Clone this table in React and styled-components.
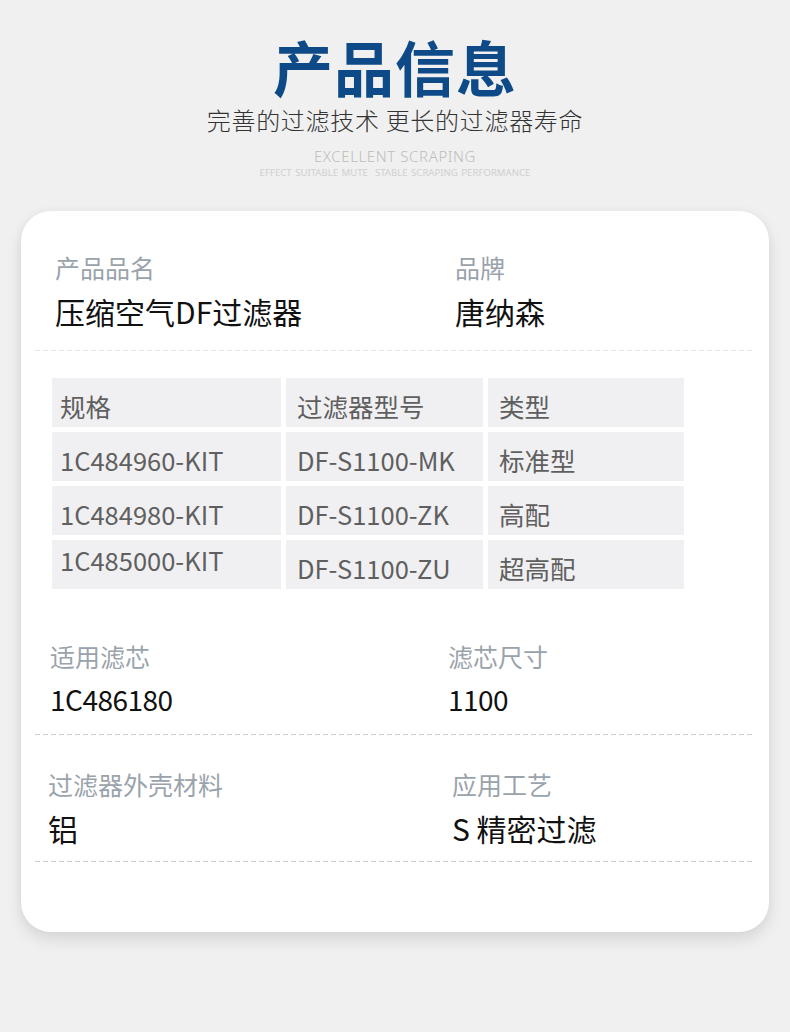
import React from 'react'
import styled, { createGlobalStyle } from 'styled-components'

const GlobalStyle = createGlobalStyle`
  html, body {
    margin: 0;
    padding: 0;
    background: #f0f0f0;
  }
  body {
    font-family: "Noto Sans CJK SC", "Noto Sans", sans-serif;
  }
`

const Page = styled.div`
  width: 790px;
  min-height: 1032px;
  padding-top: 31px;
  box-sizing: border-box;
  background: #f0f0f0;
`

const Header = styled.div`
  display: flex;
  flex-direction: column;
  align-items: center;
`

const Title = styled.h1`
  margin: 0;
  font-size: 60px;
  line-height: 70px;
  font-weight: 700;
  color: #0e4a87;
  letter-spacing: 1px;
`

const Subtitle = styled.div`
  margin-top: 4px;
  font-size: 24px;
  line-height: 30px;
  font-weight: 300;
  color: #333;
  letter-spacing: 0.7px;
`

const EnTitle = styled.div`
  margin-top: 11px;
  font-family: "Noto Sans", sans-serif;
  font-size: 15px;
  line-height: 20px;
  font-weight: 300;
  color: #bdbdbd;
  letter-spacing: 0.6px;
`

const EnLine = styled.div`
  margin-top: 1px;
  font-family: "Noto Sans", sans-serif;
  font-size: 9.6px;
  line-height: 12px;
  color: #cfcfcf;
  word-spacing: 1px;
`

const Card = styled.div`
  margin: 32px 0 0 21px;
  width: 748px;
  background: #fff;
  border-radius: 30px;
  padding: 39px 16px 70px 14px;
  box-sizing: border-box;
  box-shadow: 0 8px 16px rgba(0, 0, 0, 0.1), 0 0 10px rgba(0, 0, 0, 0.04);
`

const InfoRow = styled.div`
  display: grid;
  grid-template-columns: 400px 1fr;
  padding-left: ${p => p.$left}px;
  margin-top: ${p => p.$top || 0}px;
`

const Field = styled.div`
  display: flex;
  flex-direction: column;
  gap: ${p => p.$gap || 4}px;
  margin-left: ${p => p.$shift || 0}px;
`

const Label = styled.div`
  font-size: 25px;
  line-height: 34px;
  color: #9aa3ab;
`

const Value = styled.div`
  font-size: ${p => (p.$num ? 28 : 30)}px;
  line-height: 40px;
  color: #111;
  letter-spacing: ${p => (p.$num ? '-0.5px' : '0')};
`

const Dashed = styled.div`
  height: 1px;
  margin-top: ${p => p.$top}px;
  background: repeating-linear-gradient(
    to right,
    ${p => p.$color} 0 5px,
    transparent 5px 8px
  );
`

const Table = styled.div`
  margin: 27px 0 0 17px;
  display: grid;
  grid-template-columns: 229px 197px 196px;
  grid-auto-rows: 49px;
  column-gap: 5px;
  row-gap: 5px;
`

const Cell = styled.div`
  background: #f0f0f2;
  display: flex;
  align-items: ${p => (p.$top ? 'flex-start' : 'center')};
  padding: ${p => (p.$top ? '4px 0 0 ' : '7px 0 0 ')}${p => (p.$first ? 8 : 11)}px;
  box-sizing: border-box;
  font-size: 25.5px;
  line-height: 32px;
  color: #5f5f5f;
  white-space: nowrap;
`

const rows = [
  ['规格', '过滤器型号', '类型'],
  ['1C484960-KIT', 'DF-S1100-MK', '标准型'],
  ['1C484980-KIT', 'DF-S1100-ZK', '高配'],
  ['1C485000-KIT', 'DF-S1100-ZU', '超高配'],
]

export default function App() {
  return (
    <Page>
      <GlobalStyle />
      <Header>
        <Title>产品信息</Title>
        <Subtitle>完善的过滤技术 更长的过滤器寿命</Subtitle>
        <EnTitle>EXCELLENT SCRAPING</EnTitle>
        <EnLine>EFFECT SUITABLE MUTE&nbsp; STABLE SCRAPING PERFORMANCE</EnLine>
      </Header>

      <Card>
        <InfoRow $left={20}>
          <Field $gap={7}>
            <Label>产品品名</Label>
            <Value>压缩空气DF过滤器</Value>
          </Field>
          <Field $gap={7}>
            <Label>品牌</Label>
            <Value>唐纳森</Value>
          </Field>
        </InfoRow>
        <Dashed $top={19} $color="#e8e8e8" />

        <Table>
          {rows.map((row, i) =>
            row.map((text, j) => (
              <Cell key={i + '-' + j} $first={j === 0} $top={i === 3 && j === 0}>
                {text}
              </Cell>
            ))
          )}
        </Table>

        <InfoRow $left={15} $top={50}>
          <Field $gap={6}>
            <Label>适用滤芯</Label>
            <Value $num>1C486180</Value>
          </Field>
          <Field $gap={6} $shift={-2}>
            <Label>滤芯尺寸</Label>
            <Value $num>1100</Value>
          </Field>
        </InfoRow>
        <Dashed $top={15} $color="#cfcfcf" />

        <InfoRow $left={13} $top={32}>
          <Field $gap={7}>
            <Label>过滤器外壳材料</Label>
            <Value>铝</Value>
          </Field>
          <Field $gap={7} $shift={4}>
            <Label>应用工艺</Label>
            <Value>S 精密过滤</Value>
          </Field>
        </InfoRow>
        <Dashed $top={13} $color="#cfcfcf" />
      </Card>
    </Page>
  )
}
